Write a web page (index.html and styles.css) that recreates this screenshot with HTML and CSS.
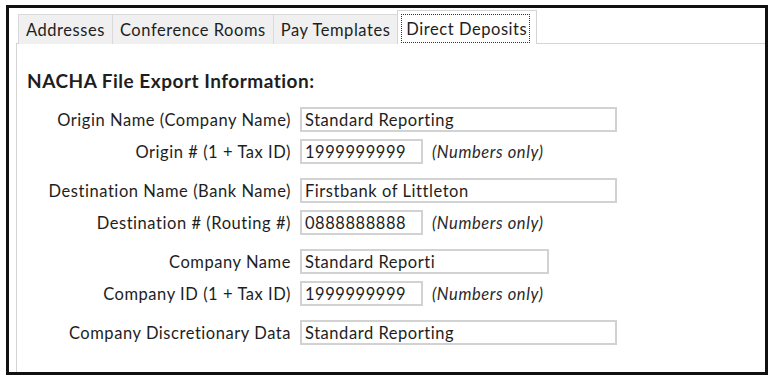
FILE: index.html
```html
<!DOCTYPE html>
<html lang="en">
<head>
    <meta charset="UTF-8">
    <meta name="viewport" content="width=device-width, initial-scale=1.0">
    <title>Direct Deposits</title>
    <link rel="stylesheet" href="styles.css">
</head>
<body>
    <div class="frame">
        <div class="tabs">
            <div class="tab">Addresses</div>
            <div class="tab">Conference Rooms</div>
            <div class="tab">Pay Templates</div>
            <div class="tab active"><span class="focus">Direct Deposits</span></div>
        </div>
        <div class="panel">
            <div class="heading">NACHA File Export Information:</div>

            <div class="group">
                <div class="row">
                    <label class="label">Origin Name (Company Name)</label>
                    <input class="field long" type="text" value="Standard Reporting" readonly>
                </div>
                <div class="row">
                    <label class="label">Origin # (1 + Tax ID)</label>
                    <input class="field short" type="text" value="1999999999" readonly>
                    <span class="hint">(Numbers only)</span>
                </div>
            </div>

            <div class="group">
                <div class="row">
                    <label class="label">Destination Name (Bank Name)</label>
                    <input class="field long" type="text" value="Firstbank of Littleton" readonly>
                </div>
                <div class="row">
                    <label class="label">Destination # (Routing #)</label>
                    <input class="field short" type="text" value="0888888888" readonly>
                    <span class="hint">(Numbers only)</span>
                </div>
            </div>

            <div class="group">
                <div class="row">
                    <label class="label">Company Name</label>
                    <input class="field medium" type="text" value="Standard Reporti" readonly>
                </div>
                <div class="row">
                    <label class="label">Company ID (1 + Tax ID)</label>
                    <input class="field short" type="text" value="1999999999" readonly>
                    <span class="hint">(Numbers only)</span>
                </div>
            </div>

            <div class="group">
                <div class="row">
                    <label class="label">Company Discretionary Data</label>
                    <input class="field long" type="text" value="Standard Reporting" readonly>
                </div>
            </div>
        </div>
    </div>
</body>
</html>
```

FILE: styles.css
```css
body {
    margin: 0;
    background: #ffffff;
    font-family: Lato, "Open Sans", sans-serif;
    color: #1e1e1e;
}
.frame {
    box-sizing: border-box;
    margin: 5px 0 0 6px;
    width: 762px;
    height: 370px;
    border: 3px solid #111111;
    padding: 3px 0 0 7px;
    overflow: hidden;
    display: flex;
    flex-direction: column;
}
.tabs {
    display: flex;
    align-items: flex-end;
    padding-left: 3px;
    height: 33px;
    position: relative;
    z-index: 1;
    margin-bottom: -1px;
}
.tab {
    box-sizing: border-box;
    height: 30px;
    padding: 2px 7px 0 7px;
    background: #f0f0f0;
    border: 1px solid #d9d9d9;
    border-bottom: none;
    margin-left: -1px;
    font-size: 16.5px;
    letter-spacing: 0.55px;
    line-height: 27px;
    white-space: nowrap;
}
.tab.active {
    height: 34px;
    background: #ffffff;
    padding: 3px 6px 0 3px;
    line-height: 26px;
    border-color: #d4d4d4;
}
.focus {
    display: block;
    border: 1px dotted #333333;
    padding: 1px 2px 0 4px;
    line-height: 26px;
}
.panel {
    flex: 1;
    border-top: 1px solid #d4d4d4;
    border-left: 1px solid #d4d4d4;
    padding-top: 26px;
}
.heading {
    font-weight: bold;
    font-size: 19px;
    letter-spacing: 0.5px;
    line-height: 22px;
    padding-left: 10px;
    margin-bottom: 15px;
}
.group {
    display: flex;
    flex-direction: column;
    gap: 7px;
    margin-bottom: 14px;
}
.row {
    display: flex;
    align-items: center;
    height: 25px;
}
.label {
    width: 274px;
    text-align: right;
    font-size: 16.5px;
    letter-spacing: 0.55px;
    margin-right: 9px;
    white-space: nowrap;
}
.field {
    box-sizing: border-box;
    height: 25px;
    border: 2px solid #d2d2d2;
    padding: 0 3px;
    font-family: inherit;
    font-size: 16.5px;
    letter-spacing: 0.55px;
    color: #1e1e1e;
    background: #ffffff;
    outline: none;
}
.long {
    width: 317px;
}
.medium {
    width: 249px;
}
.short {
    width: 123px;
}
.hint {
    margin-left: 9px;
    font-style: italic;
    font-size: 16.5px;
    letter-spacing: 0.6px;
    color: #2a2a2a;
}
```
